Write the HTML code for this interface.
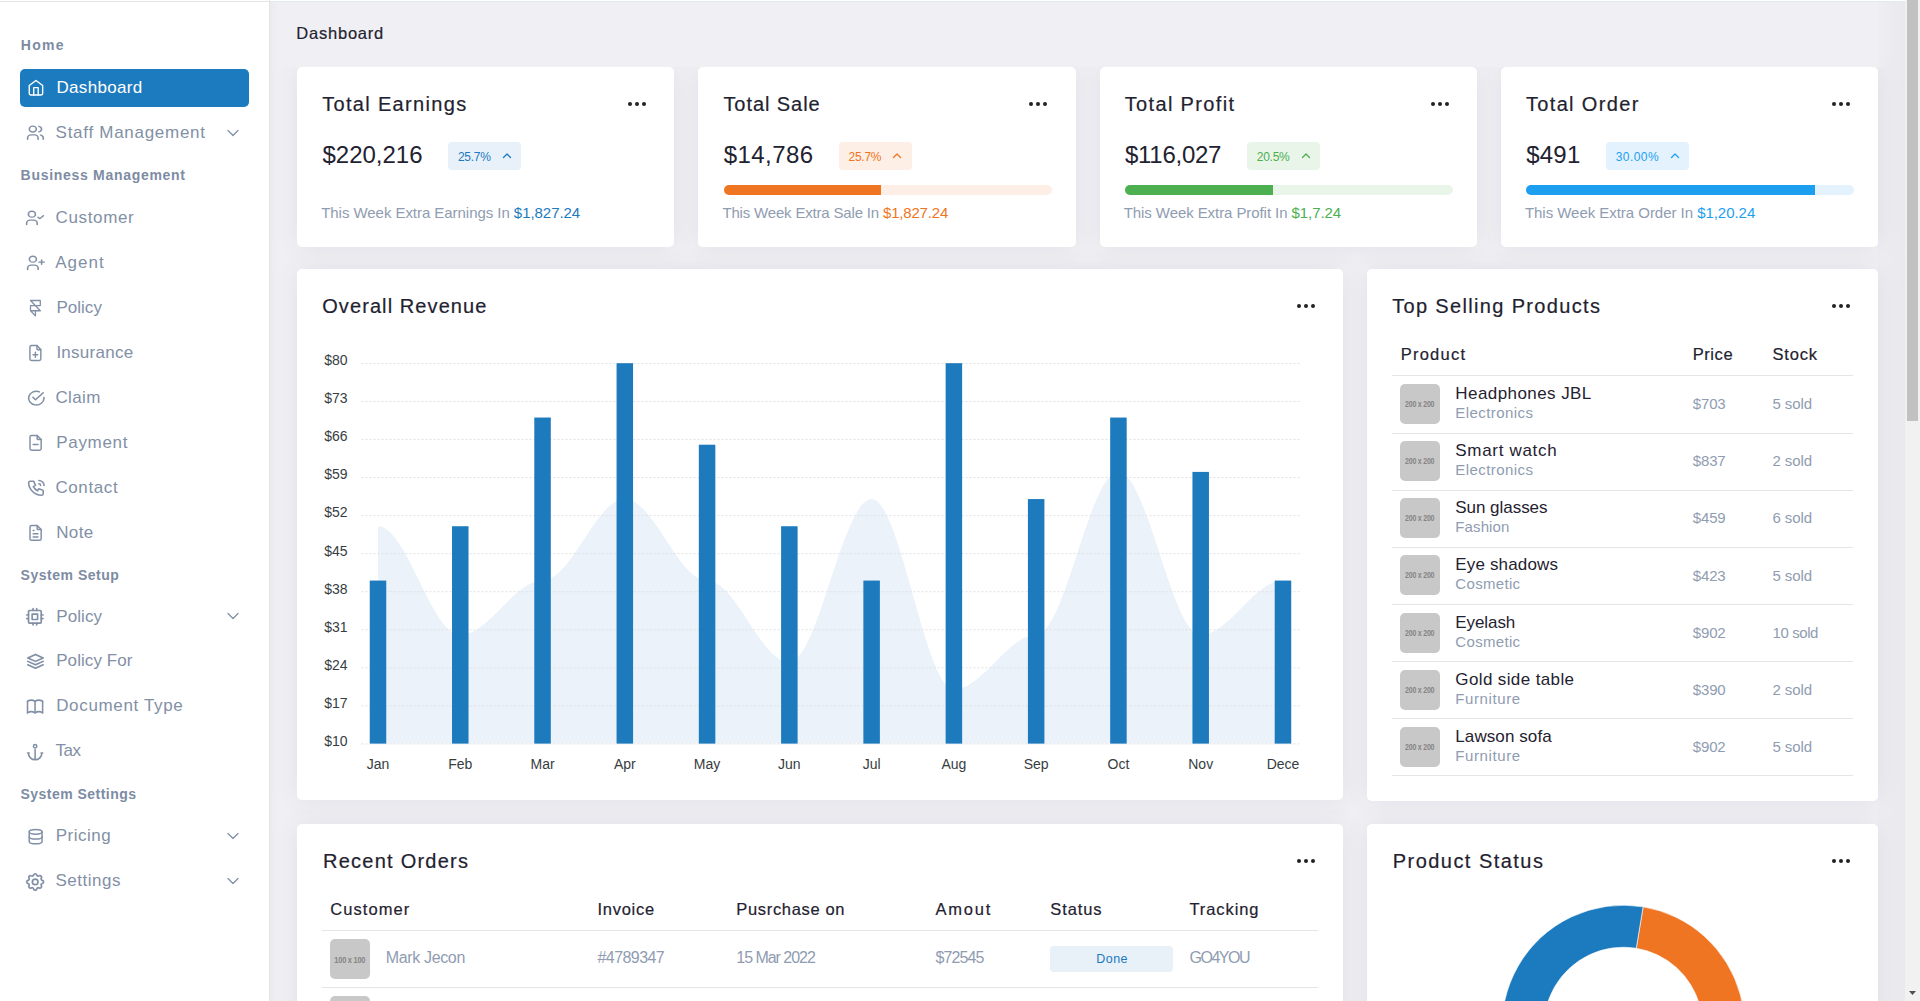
<!DOCTYPE html>
<html><head><meta charset="utf-8"><title>Dashboard</title>
<style>
html,body{margin:0;padding:0;width:1920px;height:1001px;overflow:hidden;background:#eeeef3}
body{position:relative;font-family:"Liberation Sans",sans-serif}
.t{position:absolute;white-space:nowrap;line-height:1}
.r{position:absolute}
.ic{position:absolute;overflow:visible}
.ph{background:#c8c8c8;border-radius:5px;display:flex;align-items:center;justify-content:center;overflow:hidden}
.ph span{font-family:"Liberation Sans",sans-serif;font-weight:700;color:#858585;transform:scaleX(0.78);white-space:nowrap;letter-spacing:-0.3px}
</style></head><body>
<div class="r" style="left:0px;top:0px;width:1920px;height:1001px;background:#f0f0f4;"></div>
<div class="r" style="left:270px;top:0px;width:1635px;height:1px;background:#ffffff;"></div>
<div class="r" style="left:270px;top:1px;width:1635px;height:1px;background:#e3e7ee;"></div>
<div class="r" style="left:0px;top:0px;width:269px;height:1001px;background:#ffffff;"></div>
<div class="r" style="left:0px;top:1px;width:269px;height:1px;background:#e5e5e5;"></div>
<div class="r" style="left:269px;top:0px;width:1px;height:1001px;background:#e4e4e6;"></div>
<div class="r" style="left:297px;top:67px;width:377.25px;height:180px;border-radius:5px;box-shadow:0 0 26px rgba(30,30,80,0.075);"></div>
<div class="r" style="left:698.25px;top:67px;width:377.25px;height:180px;border-radius:5px;box-shadow:0 0 26px rgba(30,30,80,0.075);"></div>
<div class="r" style="left:1099.5px;top:67px;width:377.25px;height:180px;border-radius:5px;box-shadow:0 0 26px rgba(30,30,80,0.075);"></div>
<div class="r" style="left:1500.75px;top:67px;width:377.25px;height:180px;border-radius:5px;box-shadow:0 0 26px rgba(30,30,80,0.075);"></div>
<div class="r" style="left:297px;top:269px;width:1046px;height:531px;border-radius:5px;box-shadow:0 0 26px rgba(30,30,80,0.075);"></div>
<div class="r" style="left:1367px;top:269px;width:511px;height:532px;border-radius:5px;box-shadow:0 0 26px rgba(30,30,80,0.075);"></div>
<div class="r" style="left:297px;top:824px;width:1046px;height:400px;border-radius:5px;box-shadow:0 0 26px rgba(30,30,80,0.075);"></div>
<div class="r" style="left:1367px;top:824px;width:511px;height:400px;border-radius:5px;box-shadow:0 0 26px rgba(30,30,80,0.075);"></div>
<div class="r" style="left:276px;top:2px;width:1609px;height:65px;background:#f0f0f4"></div>
<div class="t" style="left:20.80px;top:38.00px;font-size:14px;color:#7d8ba3;font-weight:700;letter-spacing:1.300px;">Home</div>
<div class="t" style="left:20.60px;top:168.00px;font-size:14px;color:#7d8ba3;font-weight:700;letter-spacing:0.706px;">Business Management</div>
<div class="t" style="left:20.60px;top:568.00px;font-size:14px;color:#7d8ba3;font-weight:700;letter-spacing:0.518px;">System Setup</div>
<div class="t" style="left:20.40px;top:786.50px;font-size:14px;color:#7d8ba3;font-weight:700;letter-spacing:0.482px;">System Settings</div>
<div class="r" style="left:20px;top:69px;width:229px;height:38px;background:#1c7abe;border-radius:5px;"></div>
<div class="t" style="left:56.40px;top:79.10px;font-size:17px;color:#ffffff;letter-spacing:0.344px;">Dashboard</div>
<svg class="ic" style="left:26.62px;top:79.42px" width="17.91" height="17.41" viewBox="0 0 24 24" preserveAspectRatio="none" fill="none" stroke="#ffffff" stroke-width="1.85" stroke-linecap="round" stroke-linejoin="round"><path d="M3 9l9-7 9 7v11a2 2 0 0 1-2 2H5a2 2 0 0 1-2-2z"/><path d="M9 22V12h6v10"/></svg>
<div class="t" style="left:55.60px;top:124.10px;font-size:17px;color:#8290a6;letter-spacing:0.720px;">Staff Management</div>
<svg class="ic" style="left:25.11px;top:124.18px" width="20.88" height="17.48" viewBox="0 0 24 24" preserveAspectRatio="none" fill="none" stroke="#8290a6" stroke-width="1.85" stroke-linecap="round" stroke-linejoin="round"><circle cx="9" cy="7" r="4"/><path d="M3 21v-2a4 4 0 0 1 4-4h4a4 4 0 0 1 4 4v2"/><path d="M16 3.13a4 4 0 0 1 0 7.75"/><path d="M21 21v-2a4 4 0 0 0-3-3.85"/></svg>
<svg class="ic" style="left:223px;top:122.8px" width="20" height="20" viewBox="0 0 24 24" fill="none" stroke="#8290a6" stroke-width="1.5" stroke-linecap="round" stroke-linejoin="round"><path d="M6 9l6 6 6-6"/></svg>
<div class="t" style="left:55.60px;top:208.75px;font-size:17px;color:#8290a6;letter-spacing:0.629px;">Customer</div>
<svg class="ic" style="left:24.39px;top:208.86px" width="21.12" height="17.79" viewBox="0 0 24 24" preserveAspectRatio="none" fill="none" stroke="#8290a6" stroke-width="1.85" stroke-linecap="round" stroke-linejoin="round"><circle cx="9" cy="7" r="4"/><path d="M3 21v-2a4 4 0 0 1 4-4h4a4 4 0 0 1 4 4v2"/><path d="M16 11l2 2 4-4"/></svg>
<div class="t" style="left:55.20px;top:253.80px;font-size:17px;color:#8290a6;letter-spacing:1.012px;">Agent</div>
<svg class="ic" style="left:24.50px;top:254.11px" width="21.00" height="17.79" viewBox="0 0 24 24" preserveAspectRatio="none" fill="none" stroke="#8290a6" stroke-width="1.85" stroke-linecap="round" stroke-linejoin="round"><circle cx="9" cy="7" r="4"/><path d="M3 21v-2a4 4 0 0 1 4-4h4a4 4 0 0 1 4 4v2"/><path d="M16 11h6M19 8v6"/></svg>
<div class="t" style="left:56.40px;top:298.70px;font-size:17px;color:#8290a6;letter-spacing:0.030px;">Policy</div>
<svg class="ic" style="left:27.20px;top:299.28px" width="16.80" height="17.64" viewBox="0 0 24 24" preserveAspectRatio="none" fill="none" stroke="#8290a6" stroke-width="1.85" stroke-linecap="round" stroke-linejoin="round"><path d="M5 16V9h14V2H5l14 14h-7m-7 0 7 7v-7m-7 0h7"/></svg>
<div class="t" style="left:56.40px;top:343.70px;font-size:17px;color:#8290a6;letter-spacing:0.256px;">Insurance</div>
<svg class="ic" style="left:26.27px;top:342.50px" width="18.76" height="20.01" viewBox="0 0 24 24" preserveAspectRatio="none" fill="none" stroke="#8290a6" stroke-width="1.85" stroke-linecap="round" stroke-linejoin="round"><path d="M14 3v4a1 1 0 0 0 1 1h4"/><path d="M17 21H7a2 2 0 0 1-2-2V5a2 2 0 0 1 2-2h7l5 5v11a2 2 0 0 1-2 2z"/><path d="M12 11v6M9 14h6"/></svg>
<div class="t" style="left:55.40px;top:388.90px;font-size:17px;color:#8290a6;letter-spacing:0.387px;">Claim</div>
<svg class="ic" style="left:25.54px;top:388.72px" width="20.63" height="18.24" viewBox="0 0 24 24" preserveAspectRatio="none" fill="none" stroke="#8290a6" stroke-width="1.85" stroke-linecap="round" stroke-linejoin="round"><path d="M21 11.1V12a9 9 0 1 1-5.3-8.2"/><path d="M9 11l3 3 9-9" transform="translate(-1 0)"/></svg>
<div class="t" style="left:56.30px;top:433.90px;font-size:17px;color:#8290a6;letter-spacing:0.667px;">Payment</div>
<svg class="ic" style="left:26.20px;top:433.22px" width="19.18" height="19.64" viewBox="0 0 24 24" preserveAspectRatio="none" fill="none" stroke="#8290a6" stroke-width="1.85" stroke-linecap="round" stroke-linejoin="round"><path d="M14 3v4a1 1 0 0 0 1 1h4"/><path d="M17 21H7a2 2 0 0 1-2-2V5a2 2 0 0 1 2-2h7l5 5v11a2 2 0 0 1-2 2z"/><path d="M9 14h6"/></svg>
<div class="t" style="left:55.40px;top:478.90px;font-size:17px;color:#8290a6;letter-spacing:0.617px;">Contact</div>
<svg class="ic" style="left:25.54px;top:477.81px" width="20.63" height="19.76" viewBox="0 0 24 24" preserveAspectRatio="none" fill="none" stroke="#8290a6" stroke-width="1.85" stroke-linecap="round" stroke-linejoin="round"><path d="M5 4h4l2 5-2.5 1.5a11 11 0 0 0 5 5L15 13l5 2v4a2 2 0 0 1-2 2A16 16 0 0 1 3 6a2 2 0 0 1 2-2"/><path d="M15 7a2 2 0 0 1 2 2M15 3a6 6 0 0 1 6 6"/></svg>
<div class="t" style="left:56.30px;top:523.90px;font-size:17px;color:#8290a6;letter-spacing:0.300px;">Note</div>
<svg class="ic" style="left:26.20px;top:522.51px" width="19.18" height="19.76" viewBox="0 0 24 24" preserveAspectRatio="none" fill="none" stroke="#8290a6" stroke-width="1.85" stroke-linecap="round" stroke-linejoin="round"><path d="M14 3v4a1 1 0 0 0 1 1h4"/><path d="M17 21H7a2 2 0 0 1-2-2V5a2 2 0 0 1 2-2h7l5 5v11a2 2 0 0 1-2 2z"/><path d="M9 9h1M9 13h6M9 17h6"/></svg>
<div class="t" style="left:56.20px;top:607.50px;font-size:17px;color:#8290a6;letter-spacing:0.110px;">Policy</div>
<svg class="ic" style="left:24.41px;top:605.63px" width="21.74" height="21.62" viewBox="0 0 24 24" preserveAspectRatio="none" fill="none" stroke="#8290a6" stroke-width="1.85" stroke-linecap="round" stroke-linejoin="round"><rect x="5" y="5" width="14" height="14" rx="1"/><path d="M9 9h6v6H9z"/><path d="M3 10h2M3 14h2M10 3v2M14 3v2M21 10h-2M21 14h-2M14 21v-2M10 21v-2"/></svg>
<svg class="ic" style="left:223px;top:606.2px" width="20" height="20" viewBox="0 0 24 24" fill="none" stroke="#8290a6" stroke-width="1.5" stroke-linecap="round" stroke-linejoin="round"><path d="M6 9l6 6 6-6"/></svg>
<div class="t" style="left:56.20px;top:652.30px;font-size:17px;color:#8290a6;letter-spacing:0.083px;">Policy For</div>
<svg class="ic" style="left:23.97px;top:651.03px" width="22.96" height="20.75" viewBox="0 0 24 24" preserveAspectRatio="none" fill="none" stroke="#8290a6" stroke-width="1.85" stroke-linecap="round" stroke-linejoin="round"><path d="M12 4L4 8l8 4 8-4-8-4"/><path d="M4 12l8 4 8-4"/><path d="M4 16l8 4 8-4"/></svg>
<div class="t" style="left:56.20px;top:697.00px;font-size:17px;color:#8290a6;letter-spacing:0.654px;">Document Type</div>
<svg class="ic" style="left:25.40px;top:696.16px" width="20.14" height="21.28" viewBox="0 0 24 24" preserveAspectRatio="none" fill="none" stroke="#8290a6" stroke-width="1.85" stroke-linecap="round" stroke-linejoin="round"><path d="M3 19a9 9 0 0 1 9 0 9 9 0 0 1 9 0"/><path d="M3 6a9 9 0 0 1 9 0 9 9 0 0 1 9 0"/><path d="M3 6v13M12 6v13M21 6v13"/></svg>
<div class="t" style="left:55.40px;top:742.40px;font-size:17px;color:#8290a6;letter-spacing:-0.475px;">Tax</div>
<svg class="ic" style="left:25.49px;top:741.67px" width="20.26" height="20.38" viewBox="0 0 24 24" preserveAspectRatio="none" fill="none" stroke="#8290a6" stroke-width="1.85" stroke-linecap="round" stroke-linejoin="round"><path d="M12 9v12m-8-8a8 8 0 0 0 16 0m1 0h-2m-14 0H3"/><circle cx="12" cy="5" r="2"/></svg>
<div class="t" style="left:55.70px;top:827.30px;font-size:17px;color:#8290a6;letter-spacing:0.492px;">Pricing</div>
<svg class="ic" style="left:25.91px;top:826.71px" width="19.27" height="19.27" viewBox="0 0 24 24" preserveAspectRatio="none" fill="none" stroke="#8290a6" stroke-width="1.85" stroke-linecap="round" stroke-linejoin="round"><ellipse cx="12" cy="6" rx="8" ry="3"/><path d="M4 6v6a8 3 0 0 0 16 0V6"/><path d="M4 12v6a8 3 0 0 0 16 0v-6"/></svg>
<svg class="ic" style="left:223px;top:826.0px" width="20" height="20" viewBox="0 0 24 24" fill="none" stroke="#8290a6" stroke-width="1.5" stroke-linecap="round" stroke-linejoin="round"><path d="M6 9l6 6 6-6"/></svg>
<div class="t" style="left:55.40px;top:872.30px;font-size:17px;color:#8290a6;letter-spacing:0.521px;">Settings</div>
<svg class="ic" style="left:24.24px;top:870.50px" width="22.36" height="21.86" viewBox="0 0 24 24" preserveAspectRatio="none" fill="none" stroke="#8290a6" stroke-width="1.85" stroke-linecap="round" stroke-linejoin="round"><path d="M10.325 4.317c.426-1.756 2.924-1.756 3.35 0a1.724 1.724 0 0 0 2.573 1.066c1.543-.94 3.31.826 2.37 2.37a1.724 1.724 0 0 0 1.065 2.572c1.756.426 1.756 2.924 0 3.35a1.724 1.724 0 0 0-1.066 2.573c.94 1.543-.826 3.31-2.37 2.37a1.724 1.724 0 0 0-2.572 1.065c-.426 1.756-2.924 1.756-3.35 0a1.724 1.724 0 0 0-2.573-1.066c-1.543.94-3.31-.826-2.37-2.37a1.724 1.724 0 0 0-1.065-2.572c-1.756-.426-1.756-2.924 0-3.35a1.724 1.724 0 0 0 1.066-2.573c-.94-1.543.826-3.31 2.37-2.37 1 .608 2.296.07 2.572-1.065z"/><circle cx="12" cy="12" r="3"/></svg>
<svg class="ic" style="left:223px;top:871.0px" width="20" height="20" viewBox="0 0 24 24" fill="none" stroke="#8290a6" stroke-width="1.5" stroke-linecap="round" stroke-linejoin="round"><path d="M6 9l6 6 6-6"/></svg>
<div class="t" style="left:296.25px;top:24.75px;font-size:16.5px;color:#1f2230;letter-spacing:0.787px;-webkit-text-stroke:0.2px #1f2230;">Dashboard</div>
<div class="r" style="left:297px;top:67px;width:377.25px;height:180px;background:#ffffff;border-radius:5px;"></div>
<div class="t" style="left:322.20px;top:94.00px;font-size:20px;color:#1f2230;letter-spacing:1.327px;-webkit-text-stroke:0.2px #1f2230;">Total Earnings</div>
<div class="r" style="left:628.00px;top:102.00px;width:4px;height:4px;border-radius:50%;background:#222"></div>
<div class="r" style="left:635.00px;top:102.00px;width:4px;height:4px;border-radius:50%;background:#222"></div>
<div class="r" style="left:642.00px;top:102.00px;width:4px;height:4px;border-radius:50%;background:#222"></div>
<div class="t" style="left:322.50px;top:142.75px;font-size:24px;color:#1f2230;letter-spacing:-0.014px;">$220,216</div>
<div class="r" style="left:448.1px;top:142px;width:73px;height:28px;background:#e8f1f9;border-radius:4px;"></div>
<div class="t" style="left:457.90px;top:150.50px;font-size:12px;color:#1c7abe;letter-spacing:-0.262px;">25.7%</div>
<svg class="ic" style="left:501.60px;top:151px" width="10" height="10" viewBox="0 0 10 10" fill="none" stroke="#1c7abe" stroke-width="1.3" stroke-linecap="round" stroke-linejoin="round"><path d="M1.5 6.5L5 3l3.5 3.5"/></svg>
<div class="t" style="left:321.20px;top:204.80px;font-size:15px;color:#8f9cb1;letter-spacing:-0.047px;">This Week Extra Earnings In <span style="color:#1c7abe">$1,827.24</span></div>
<div class="r" style="left:698.25px;top:67px;width:377.25px;height:180px;background:#ffffff;border-radius:5px;"></div>
<div class="t" style="left:723.45px;top:94.00px;font-size:20px;color:#1f2230;letter-spacing:0.928px;-webkit-text-stroke:0.2px #1f2230;">Total Sale</div>
<div class="r" style="left:1029.25px;top:102.00px;width:4px;height:4px;border-radius:50%;background:#222"></div>
<div class="r" style="left:1036.25px;top:102.00px;width:4px;height:4px;border-radius:50%;background:#222"></div>
<div class="r" style="left:1043.25px;top:102.00px;width:4px;height:4px;border-radius:50%;background:#222"></div>
<div class="t" style="left:723.75px;top:142.75px;font-size:24px;color:#1f2230;letter-spacing:0.442px;">$14,786</div>
<div class="r" style="left:838.75px;top:142px;width:73px;height:28px;background:#fdefe6;border-radius:4px;"></div>
<div class="t" style="left:848.55px;top:150.50px;font-size:12px;color:#ef7522;letter-spacing:-0.262px;">25.7%</div>
<svg class="ic" style="left:892.25px;top:151px" width="10" height="10" viewBox="0 0 10 10" fill="none" stroke="#ef7522" stroke-width="1.3" stroke-linecap="round" stroke-linejoin="round"><path d="M1.5 6.5L5 3l3.5 3.5"/></svg>
<div class="r" style="left:723.75px;top:185px;width:328px;height:10px;background:#fdefe6;border-radius:5px;"></div>
<div class="r" style="left:723.75px;top:185px;width:157.4px;height:10px;background:#ef7522;border-radius:5px 0 0 5px;"></div>
<div class="t" style="left:722.45px;top:204.80px;font-size:15px;color:#8f9cb1;letter-spacing:-0.178px;">This Week Extra Sale In <span style="color:#ef7522">$1,827.24</span></div>
<div class="r" style="left:1099.5px;top:67px;width:377.25px;height:180px;background:#ffffff;border-radius:5px;"></div>
<div class="t" style="left:1124.70px;top:94.00px;font-size:20px;color:#1f2230;letter-spacing:1.355px;-webkit-text-stroke:0.2px #1f2230;">Total Profit</div>
<div class="r" style="left:1430.50px;top:102.00px;width:4px;height:4px;border-radius:50%;background:#222"></div>
<div class="r" style="left:1437.50px;top:102.00px;width:4px;height:4px;border-radius:50%;background:#222"></div>
<div class="r" style="left:1444.50px;top:102.00px;width:4px;height:4px;border-radius:50%;background:#222"></div>
<div class="t" style="left:1125.00px;top:142.75px;font-size:24px;color:#1f2230;letter-spacing:-0.271px;">$116,027</div>
<div class="r" style="left:1247.0px;top:142px;width:73px;height:28px;background:#eaf5ea;border-radius:4px;"></div>
<div class="t" style="left:1256.80px;top:150.50px;font-size:12px;color:#4caf50;letter-spacing:-0.262px;">20.5%</div>
<svg class="ic" style="left:1300.50px;top:151px" width="10" height="10" viewBox="0 0 10 10" fill="none" stroke="#4caf50" stroke-width="1.3" stroke-linecap="round" stroke-linejoin="round"><path d="M1.5 6.5L5 3l3.5 3.5"/></svg>
<div class="r" style="left:1125.0px;top:185px;width:328px;height:10px;background:#eaf5ea;border-radius:5px;"></div>
<div class="r" style="left:1125.0px;top:185px;width:147.6px;height:10px;background:#4caf50;border-radius:5px 0 0 5px;"></div>
<div class="t" style="left:1123.70px;top:204.80px;font-size:15px;color:#8f9cb1;letter-spacing:-0.075px;">This Week Extra Profit In <span style="color:#4caf50">$1,7.24</span></div>
<div class="r" style="left:1500.75px;top:67px;width:377.25px;height:180px;background:#ffffff;border-radius:5px;"></div>
<div class="t" style="left:1525.95px;top:94.00px;font-size:20px;color:#1f2230;letter-spacing:1.345px;-webkit-text-stroke:0.2px #1f2230;">Total Order</div>
<div class="r" style="left:1831.75px;top:102.00px;width:4px;height:4px;border-radius:50%;background:#222"></div>
<div class="r" style="left:1838.75px;top:102.00px;width:4px;height:4px;border-radius:50%;background:#222"></div>
<div class="r" style="left:1845.75px;top:102.00px;width:4px;height:4px;border-radius:50%;background:#222"></div>
<div class="t" style="left:1526.25px;top:142.75px;font-size:24px;color:#1f2230;letter-spacing:0.200px;">$491</div>
<div class="r" style="left:1605.85px;top:142px;width:83.5px;height:28px;background:#e3f2fd;border-radius:4px;"></div>
<div class="t" style="left:1615.65px;top:150.50px;font-size:12px;color:#1d9ff0;letter-spacing:0.460px;">30.00%</div>
<svg class="ic" style="left:1669.85px;top:151px" width="10" height="10" viewBox="0 0 10 10" fill="none" stroke="#1d9ff0" stroke-width="1.3" stroke-linecap="round" stroke-linejoin="round"><path d="M1.5 6.5L5 3l3.5 3.5"/></svg>
<div class="r" style="left:1526.25px;top:185px;width:328px;height:10px;background:#e3f2fd;border-radius:5px;"></div>
<div class="r" style="left:1526.25px;top:185px;width:288.6px;height:10px;background:#1d9ff0;border-radius:5px 0 0 5px;"></div>
<div class="t" style="left:1524.95px;top:204.80px;font-size:15px;color:#8f9cb1;letter-spacing:-0.037px;">This Week Extra Order In <span style="color:#1d9ff0">$1,20.24</span></div>
<div class="r" style="left:297px;top:269px;width:1046px;height:531px;background:#ffffff;border-radius:5px;"></div>
<div class="t" style="left:322.20px;top:296.10px;font-size:20px;color:#1f2230;letter-spacing:1.089px;-webkit-text-stroke:0.2px #1f2230;">Overall Revenue</div>
<div class="r" style="left:1296.75px;top:304.00px;width:4px;height:4px;border-radius:50%;background:#222"></div>
<div class="r" style="left:1303.75px;top:304.00px;width:4px;height:4px;border-radius:50%;background:#222"></div>
<div class="r" style="left:1310.75px;top:304.00px;width:4px;height:4px;border-radius:50%;background:#222"></div>
<div class="r" style="left:1367px;top:269px;width:511px;height:532px;background:#ffffff;border-radius:5px;"></div>
<div class="t" style="left:1392.20px;top:296.20px;font-size:20px;color:#1f2230;letter-spacing:1.339px;-webkit-text-stroke:0.2px #1f2230;">Top Selling Products</div>
<div class="r" style="left:1831.75px;top:304.00px;width:4px;height:4px;border-radius:50%;background:#222"></div>
<div class="r" style="left:1838.75px;top:304.00px;width:4px;height:4px;border-radius:50%;background:#222"></div>
<div class="r" style="left:1845.75px;top:304.00px;width:4px;height:4px;border-radius:50%;background:#222"></div>
<svg class="ic" style="left:0;top:0" width="1920" height="1001" viewBox="0 0 1920 1001">
<path d="M378.00 526.23 C406.79 526.23 431.48 634.91 460.27 634.91 C489.06 634.91 513.75 580.57 542.54 580.57 C571.33 580.57 596.02 499.06 624.81 499.06 C653.60 499.06 678.29 580.57 707.08 580.57 C735.87 580.57 760.56 662.09 789.35 662.09 C818.14 662.09 842.83 499.06 871.62 499.06 C900.41 499.06 925.10 689.26 953.89 689.26 C982.68 689.26 1007.37 634.91 1036.16 634.91 C1064.95 634.91 1089.64 471.89 1118.43 471.89 C1147.22 471.89 1171.91 634.91 1200.70 634.91 C1229.49 634.91 1254.18 580.57 1282.97 580.57 L1282.97 743.6 L378.00 743.6 Z" fill="#ebf2fa"/>
<line x1="361.5" x2="1300" y1="363.50" y2="363.50" stroke="#e0e0e0" stroke-width="1" stroke-dasharray="2 2"/>
<line x1="361.5" x2="1300" y1="401.54" y2="401.54" stroke="#e0e0e0" stroke-width="1" stroke-dasharray="2 2"/>
<line x1="361.5" x2="1300" y1="439.58" y2="439.58" stroke="#e0e0e0" stroke-width="1" stroke-dasharray="2 2"/>
<line x1="361.5" x2="1300" y1="477.62" y2="477.62" stroke="#e0e0e0" stroke-width="1" stroke-dasharray="2 2"/>
<line x1="361.5" x2="1300" y1="515.66" y2="515.66" stroke="#e0e0e0" stroke-width="1" stroke-dasharray="2 2"/>
<line x1="361.5" x2="1300" y1="553.70" y2="553.70" stroke="#e0e0e0" stroke-width="1" stroke-dasharray="2 2"/>
<line x1="361.5" x2="1300" y1="591.74" y2="591.74" stroke="#e0e0e0" stroke-width="1" stroke-dasharray="2 2"/>
<line x1="361.5" x2="1300" y1="629.78" y2="629.78" stroke="#e0e0e0" stroke-width="1" stroke-dasharray="2 2"/>
<line x1="361.5" x2="1300" y1="667.82" y2="667.82" stroke="#e0e0e0" stroke-width="1" stroke-dasharray="2 2"/>
<line x1="361.5" x2="1300" y1="705.86" y2="705.86" stroke="#e0e0e0" stroke-width="1" stroke-dasharray="2 2"/>
<line x1="361.5" x2="1300" y1="743.90" y2="743.90" stroke="#e0e0e0" stroke-width="1" stroke-dasharray="2 2"/>
<rect x="369.75" y="580.57" width="16.5" height="163.03" fill="#1c7abd"/>
<rect x="452.02" y="526.23" width="16.5" height="217.37" fill="#1c7abd"/>
<rect x="534.29" y="417.54" width="16.5" height="326.06" fill="#1c7abd"/>
<rect x="616.56" y="363.20" width="16.5" height="380.40" fill="#1c7abd"/>
<rect x="698.83" y="444.71" width="16.5" height="298.89" fill="#1c7abd"/>
<rect x="781.10" y="526.23" width="16.5" height="217.37" fill="#1c7abd"/>
<rect x="863.37" y="580.57" width="16.5" height="163.03" fill="#1c7abd"/>
<rect x="945.64" y="363.20" width="16.5" height="380.40" fill="#1c7abd"/>
<rect x="1027.91" y="499.06" width="16.5" height="244.54" fill="#1c7abd"/>
<rect x="1110.18" y="417.54" width="16.5" height="326.06" fill="#1c7abd"/>
<rect x="1192.45" y="471.89" width="16.5" height="271.71" fill="#1c7abd"/>
<rect x="1274.72" y="580.57" width="16.5" height="163.03" fill="#1c7abd"/>
</svg>
<div class="t" style="left:324.20px;top:353.30px;font-size:14px;color:#373d3f;">$80</div>
<div class="t" style="left:324.20px;top:391.34px;font-size:14px;color:#373d3f;">$73</div>
<div class="t" style="left:324.20px;top:429.38px;font-size:14px;color:#373d3f;">$66</div>
<div class="t" style="left:324.20px;top:467.42px;font-size:14px;color:#373d3f;">$59</div>
<div class="t" style="left:324.20px;top:505.46px;font-size:14px;color:#373d3f;">$52</div>
<div class="t" style="left:324.20px;top:543.50px;font-size:14px;color:#373d3f;">$45</div>
<div class="t" style="left:324.20px;top:581.54px;font-size:14px;color:#373d3f;">$38</div>
<div class="t" style="left:324.20px;top:619.58px;font-size:14px;color:#373d3f;">$31</div>
<div class="t" style="left:324.20px;top:657.62px;font-size:14px;color:#373d3f;">$24</div>
<div class="t" style="left:324.20px;top:695.66px;font-size:14px;color:#373d3f;">$17</div>
<div class="t" style="left:324.20px;top:733.70px;font-size:14px;color:#373d3f;">$10</div>
<div class="t" style="left:328.00px;width:100px;text-align:center;top:756.7px;font-size:14px;color:#373d3f">Jan</div>
<div class="t" style="left:410.27px;width:100px;text-align:center;top:756.7px;font-size:14px;color:#373d3f">Feb</div>
<div class="t" style="left:492.54px;width:100px;text-align:center;top:756.7px;font-size:14px;color:#373d3f">Mar</div>
<div class="t" style="left:574.81px;width:100px;text-align:center;top:756.7px;font-size:14px;color:#373d3f">Apr</div>
<div class="t" style="left:657.08px;width:100px;text-align:center;top:756.7px;font-size:14px;color:#373d3f">May</div>
<div class="t" style="left:739.35px;width:100px;text-align:center;top:756.7px;font-size:14px;color:#373d3f">Jun</div>
<div class="t" style="left:821.62px;width:100px;text-align:center;top:756.7px;font-size:14px;color:#373d3f">Jul</div>
<div class="t" style="left:903.89px;width:100px;text-align:center;top:756.7px;font-size:14px;color:#373d3f">Aug</div>
<div class="t" style="left:986.16px;width:100px;text-align:center;top:756.7px;font-size:14px;color:#373d3f">Sep</div>
<div class="t" style="left:1068.43px;width:100px;text-align:center;top:756.7px;font-size:14px;color:#373d3f">Oct</div>
<div class="t" style="left:1150.70px;width:100px;text-align:center;top:756.7px;font-size:14px;color:#373d3f">Nov</div>
<div class="t" style="left:1232.97px;width:100px;text-align:center;top:756.7px;font-size:14px;color:#373d3f">Dece</div>
<div class="t" style="left:1400.70px;top:345.70px;font-size:16.5px;color:#1f2230;letter-spacing:1.242px;-webkit-text-stroke:0.2px #1f2230;">Product</div>
<div class="t" style="left:1692.70px;top:345.70px;font-size:16.5px;color:#1f2230;letter-spacing:0.575px;-webkit-text-stroke:0.2px #1f2230;">Price</div>
<div class="t" style="left:1772.50px;top:345.70px;font-size:16.5px;color:#1f2230;letter-spacing:0.800px;-webkit-text-stroke:0.2px #1f2230;">Stock</div>
<div class="r" style="left:1392px;top:375px;width:461px;height:1px;background:#e3e5e8;"></div>
<div class="r ph" style="left:1400px;top:384.00px;width:40px;height:40px;"><span style="font-size:9px">200 x 200</span></div>
<div class="t" style="left:1455.30px;top:384.95px;font-size:17px;color:#1f2230;letter-spacing:0.427px;">Headphones JBL</div>
<div class="t" style="left:1455.30px;top:405.00px;font-size:15px;color:#8f9cb1;letter-spacing:0.425px;">Electronics</div>
<div class="t" style="left:1692.70px;top:396.20px;font-size:15px;color:#8f9cb1;letter-spacing:-0.117px;">$703</div>
<div class="t" style="left:1772.50px;top:396.20px;font-size:15px;color:#8f9cb1;letter-spacing:-0.070px;">5 sold</div>
<div class="r" style="left:1392px;top:433px;width:461px;height:1px;background:#e3e5e8;"></div>
<div class="r ph" style="left:1400px;top:441.14px;width:40px;height:40px;"><span style="font-size:9px">200 x 200</span></div>
<div class="t" style="left:1455.30px;top:442.09px;font-size:17px;color:#1f2230;letter-spacing:0.685px;">Smart watch</div>
<div class="t" style="left:1455.30px;top:462.14px;font-size:15px;color:#8f9cb1;letter-spacing:0.425px;">Electronics</div>
<div class="t" style="left:1692.70px;top:453.34px;font-size:15px;color:#8f9cb1;letter-spacing:-0.117px;">$837</div>
<div class="t" style="left:1772.50px;top:453.34px;font-size:15px;color:#8f9cb1;letter-spacing:-0.070px;">2 sold</div>
<div class="r" style="left:1392px;top:490px;width:461px;height:1px;background:#e3e5e8;"></div>
<div class="r ph" style="left:1400px;top:498.28px;width:40px;height:40px;"><span style="font-size:9px">200 x 200</span></div>
<div class="t" style="left:1455.30px;top:499.23px;font-size:17px;color:#1f2230;letter-spacing:-0.040px;">Sun glasses</div>
<div class="t" style="left:1455.30px;top:519.28px;font-size:15px;color:#8f9cb1;letter-spacing:0.108px;">Fashion</div>
<div class="t" style="left:1692.70px;top:510.48px;font-size:15px;color:#8f9cb1;letter-spacing:-0.117px;">$459</div>
<div class="t" style="left:1772.50px;top:510.48px;font-size:15px;color:#8f9cb1;letter-spacing:-0.070px;">6 sold</div>
<div class="r" style="left:1392px;top:547px;width:461px;height:1px;background:#e3e5e8;"></div>
<div class="r ph" style="left:1400px;top:555.42px;width:40px;height:40px;"><span style="font-size:9px">200 x 200</span></div>
<div class="t" style="left:1455.30px;top:556.37px;font-size:17px;color:#1f2230;letter-spacing:0.160px;">Eye shadows</div>
<div class="t" style="left:1455.30px;top:576.42px;font-size:15px;color:#8f9cb1;letter-spacing:0.329px;">Cosmetic</div>
<div class="t" style="left:1692.70px;top:567.62px;font-size:15px;color:#8f9cb1;letter-spacing:-0.117px;">$423</div>
<div class="t" style="left:1772.50px;top:567.62px;font-size:15px;color:#8f9cb1;letter-spacing:-0.070px;">5 sold</div>
<div class="r" style="left:1392px;top:604px;width:461px;height:1px;background:#e3e5e8;"></div>
<div class="r ph" style="left:1400px;top:612.56px;width:40px;height:40px;"><span style="font-size:9px">200 x 200</span></div>
<div class="t" style="left:1455.30px;top:613.51px;font-size:17px;color:#1f2230;letter-spacing:-0.083px;">Eyelash</div>
<div class="t" style="left:1455.30px;top:633.56px;font-size:15px;color:#8f9cb1;letter-spacing:0.329px;">Cosmetic</div>
<div class="t" style="left:1692.70px;top:624.76px;font-size:15px;color:#8f9cb1;letter-spacing:-0.117px;">$902</div>
<div class="t" style="left:1772.50px;top:624.76px;font-size:15px;color:#8f9cb1;letter-spacing:-0.408px;">10 sold</div>
<div class="r" style="left:1392px;top:661px;width:461px;height:1px;background:#e3e5e8;"></div>
<div class="r ph" style="left:1400px;top:669.70px;width:40px;height:40px;"><span style="font-size:9px">200 x 200</span></div>
<div class="t" style="left:1455.30px;top:670.65px;font-size:17px;color:#1f2230;letter-spacing:0.379px;">Gold side table</div>
<div class="t" style="left:1455.30px;top:690.70px;font-size:15px;color:#8f9cb1;letter-spacing:0.600px;">Furniture</div>
<div class="t" style="left:1692.70px;top:681.90px;font-size:15px;color:#8f9cb1;letter-spacing:-0.117px;">$390</div>
<div class="t" style="left:1772.50px;top:681.90px;font-size:15px;color:#8f9cb1;letter-spacing:-0.070px;">2 sold</div>
<div class="r" style="left:1392px;top:718px;width:461px;height:1px;background:#e3e5e8;"></div>
<div class="r ph" style="left:1400px;top:726.84px;width:40px;height:40px;"><span style="font-size:9px">200 x 200</span></div>
<div class="t" style="left:1455.30px;top:727.79px;font-size:17px;color:#1f2230;letter-spacing:0.090px;">Lawson sofa</div>
<div class="t" style="left:1455.30px;top:747.84px;font-size:15px;color:#8f9cb1;letter-spacing:0.600px;">Furniture</div>
<div class="t" style="left:1692.70px;top:739.04px;font-size:15px;color:#8f9cb1;letter-spacing:-0.117px;">$902</div>
<div class="t" style="left:1772.50px;top:739.04px;font-size:15px;color:#8f9cb1;letter-spacing:-0.070px;">5 sold</div>
<div class="r" style="left:1392px;top:775px;width:461px;height:1px;background:#e3e5e8;"></div>
<div class="r" style="left:297px;top:824px;width:1046px;height:400px;background:#ffffff;border-radius:5px;"></div>
<div class="t" style="left:323.00px;top:851.30px;font-size:20px;color:#1f2230;letter-spacing:1.246px;-webkit-text-stroke:0.2px #1f2230;">Recent Orders</div>
<div class="r" style="left:1296.75px;top:859.00px;width:4px;height:4px;border-radius:50%;background:#222"></div>
<div class="r" style="left:1303.75px;top:859.00px;width:4px;height:4px;border-radius:50%;background:#222"></div>
<div class="r" style="left:1310.75px;top:859.00px;width:4px;height:4px;border-radius:50%;background:#222"></div>
<div class="t" style="left:330.30px;top:901.20px;font-size:16.5px;color:#1f2230;letter-spacing:1.071px;-webkit-text-stroke:0.2px #1f2230;">Customer</div>
<div class="t" style="left:597.50px;top:901.20px;font-size:16.5px;color:#1f2230;letter-spacing:0.733px;-webkit-text-stroke:0.2px #1f2230;">Invoice</div>
<div class="t" style="left:736.30px;top:901.20px;font-size:16.5px;color:#1f2230;letter-spacing:0.664px;-webkit-text-stroke:0.2px #1f2230;">Pusrchase on</div>
<div class="t" style="left:935.40px;top:901.20px;font-size:16.5px;color:#1f2230;letter-spacing:1.825px;-webkit-text-stroke:0.2px #1f2230;">Amout</div>
<div class="t" style="left:1050.30px;top:901.20px;font-size:16.5px;color:#1f2230;letter-spacing:0.880px;-webkit-text-stroke:0.2px #1f2230;">Status</div>
<div class="t" style="left:1189.50px;top:901.20px;font-size:16.5px;color:#1f2230;letter-spacing:0.907px;-webkit-text-stroke:0.2px #1f2230;">Tracking</div>
<div class="r" style="left:322px;top:930px;width:996px;height:1px;background:#e3e5e8;"></div>
<div class="r ph" style="left:330px;top:939.20px;width:40px;height:40px;"><span style="font-size:9.5px">100 x 100</span></div>
<div class="t" style="left:385.80px;top:950.30px;font-size:16px;color:#8f9cb1;letter-spacing:-0.356px;">Mark Jecon</div>
<div class="t" style="left:597.50px;top:949.70px;font-size:16px;color:#8f9cb1;letter-spacing:-0.571px;">#4789347</div>
<div class="t" style="left:736.30px;top:949.70px;font-size:16px;color:#8f9cb1;letter-spacing:-1.035px;">15 Mar 2022</div>
<div class="t" style="left:935.40px;top:950.00px;font-size:16px;color:#8f9cb1;letter-spacing:-0.880px;">$72545</div>
<div class="r" style="left:1050.3px;top:946.2px;width:122.7px;height:25.6px;background:#e8f0f8;border-radius:4px;"></div>
<div class="t" style="left:1096.20px;top:953.00px;font-size:12.5px;color:#1c7abe;letter-spacing:0.500px;">Done</div>
<div class="t" style="left:1189.50px;top:950.00px;font-size:16px;color:#8f9cb1;letter-spacing:-1.490px;">GO4YOU</div>
<div class="r" style="left:322px;top:987px;width:996px;height:1px;background:#e3e5e8;"></div>
<div class="r ph" style="left:330px;top:996.20px;width:40px;height:40px;"><span style="font-size:8.5px">100 x 100</span></div>
<div class="r" style="left:1367px;top:824px;width:511px;height:400px;background:#ffffff;border-radius:5px;"></div>
<div class="t" style="left:1392.70px;top:851.30px;font-size:20px;color:#1f2230;letter-spacing:1.469px;-webkit-text-stroke:0.2px #1f2230;">Product Status</div>
<div class="r" style="left:1831.75px;top:859.00px;width:4px;height:4px;border-radius:50%;background:#222"></div>
<div class="r" style="left:1838.75px;top:859.00px;width:4px;height:4px;border-radius:50%;background:#222"></div>
<div class="r" style="left:1845.75px;top:859.00px;width:4px;height:4px;border-radius:50%;background:#222"></div>
<svg class="ic" style="left:0;top:0" width="1920" height="1001" viewBox="0 0 1920 1001"><path d="M1643.11 906.83 A121.3 121.3 0 0 1 1701.27 1119.42 L1674.27 1087.25 A79.3 79.3 0 0 0 1636.25 948.26 Z" fill="#ef7522" stroke="#fff" stroke-width="0.6"/><path d="M1701.27 1119.42 A121.3 121.3 0 0 1 1530.38 1104.47 L1562.55 1077.47 A79.3 79.3 0 0 0 1674.27 1087.25 Z" fill="#4caf50" stroke="#fff" stroke-width="0.6"/><path d="M1530.38 1104.47 A121.3 121.3 0 0 1 1643.11 906.83 L1636.25 948.26 A79.3 79.3 0 0 0 1562.55 1077.47 Z" fill="#1c7abe" stroke="#fff" stroke-width="0.6"/></svg>
<div class="r" style="left:270px;top:2px;width:8px;height:999px;background:linear-gradient(90deg, rgba(40,40,90,0.03) 0%, rgba(40,40,90,0) 100%);pointer-events:none;"></div>
<div class="r" style="left:1878px;top:2px;width:27px;height:999px;background:linear-gradient(90deg, rgba(40,40,90,0.01) 0%, rgba(40,40,90,0.04) 100%);pointer-events:none;"></div>
<div class="r" style="left:1905px;top:0px;width:15px;height:1001px;background:#f1f1f1;"></div>
<div class="r" style="left:1907px;top:0px;width:11px;height:421px;background:#c1c1c1;"></div>
<svg class="ic" style="left:1905px;top:986px" width="15" height="15" viewBox="0 0 15 15"><path d="M4 5h7l-3.5 4z" fill="#505050"/></svg>
</body></html>
